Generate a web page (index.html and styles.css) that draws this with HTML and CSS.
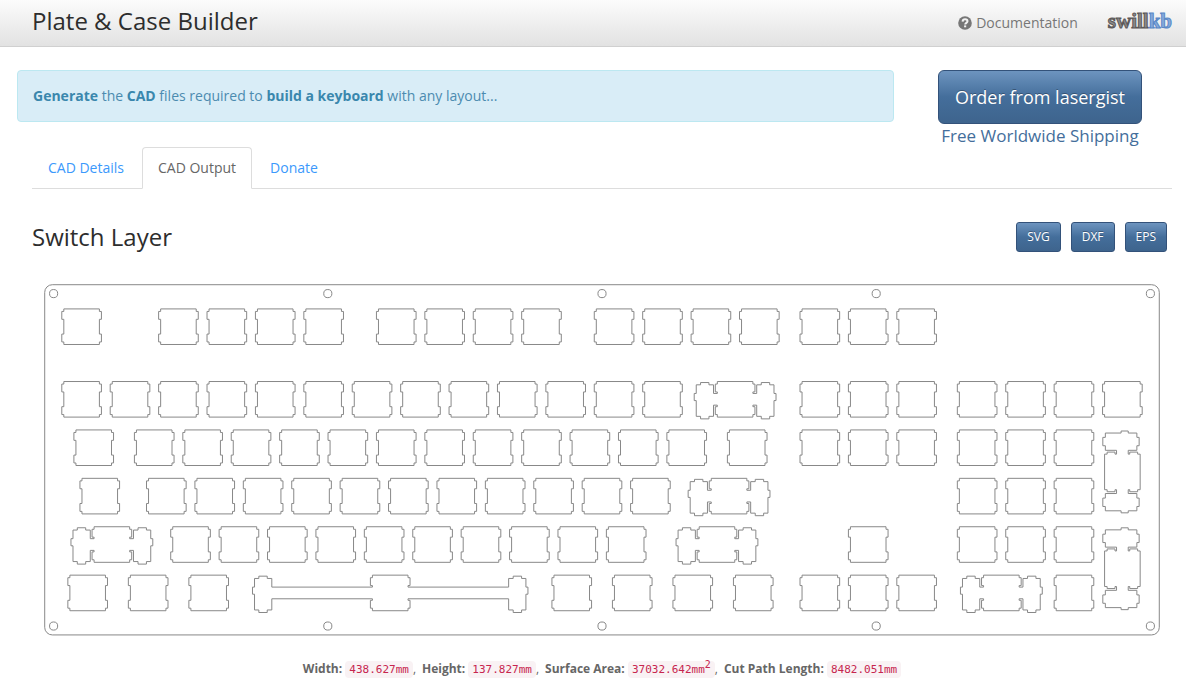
FILE: index.html
```html
<!DOCTYPE html>
<html lang="en">
<head>
<meta charset="utf-8">
<title>Plate &amp; Case Builder</title>
<link rel="stylesheet" href="styles.css">
</head>
<body>
<header class="navbar">
  <h1 class="brand">Plate &amp; Case Builder</h1>
  <nav class="links">
    <a class="docs" href="#docs">
      <svg class="docs-icon" viewBox="0 0 14 14" aria-hidden="true">
        <circle cx="7" cy="7" r="6.8" fill="#777"/>
        <path d="M4.600 5.600C4.700 4 5.700 3.300 7.100 3.300s2.400.8 2.400 2c0 1.600-2.300 1.600-2.300 3.300" fill="none" stroke="#f3f3f3" stroke-width="2"/>
        <rect x="6.100" y="9.400" width="2.100" height="1.900" fill="#f3f3f3"/>
      </svg>
      Documentation
    </a>
    <a class="logo" href="#home">swill<span class="logo-kb">kb</span></a>
  </nav>
</header>
<main class="page">
  <section class="intro">
    <p class="alert"><strong>Generate</strong> the <strong>CAD</strong> files required to <strong>build a keyboard</strong> with any layout...</p>
    <div class="order">
      <button class="btn btn-large" type="button">Order from lasergist</button>
      <a class="shipping" href="#shipping">Free Worldwide Shipping</a>
    </div>
  </section>
  <nav class="tabs">
    <a class="tab" href="#details">CAD Details</a>
    <a class="tab tab-active" href="#output" aria-current="page">CAD Output</a>
    <a class="tab" href="#donate">Donate</a>
  </nav>
  <section class="output">
    <div class="layer-head">
      <h2 class="layer-title">Switch Layer</h2>
      <div class="exports">
        <button class="btn" type="button">SVG</button>
        <button class="btn" type="button">DXF</button>
        <button class="btn" type="button">EPS</button>
      </div>
    </div>
    <svg class="plate" viewBox="0 0 448.627 147.827" role="img" aria-label="Switch layer plate">
      <defs>
        <path id="k1" d="M-7-7H7V-6H7.800V-2.900H7V2.900H7.800V6H7V7H-7V6H-7.800V2.900H-7V-2.900H-7.800V-6H-7Z"/>
        <path id="k2" d="M-7-7H7V-6H7.800V-2.900H7V-2.300H8.500V-5.700H10.300V-6.600H13.600V-5.700H15.300V-2.300H16.100V.5H15.300V6.700H13.600V7.700H10.300V6.700H8.500V2.300H7V2.900H7.800V6H7V7H-7V6H-7.800V2.900H-7V2.300H-8.500V6.700H-10.300V7.700H-13.600V6.700H-15.300V.5H-16.100V-2.300H-15.300V-5.700H-13.600V-6.600H-10.300V-5.700H-8.500V-2.300H-7V-2.900H-7.800V-6H-7Z"/>
        <path id="k6" d="M-7-7H7V-6H7.800V-2.900H7V-2.300H46.600V-5.700H48.400V-6.600H51.700V-5.700H53.400V-2.300H54.200V.5H53.400V6.700H51.700V7.700H48.400V6.700H46.600V2.300H7V2.900H7.800V6H7V7H-7V6H-7.800V2.900H-7V2.300H-46.600V6.700H-48.400V7.700H-51.700V6.700H-53.400V.5H-54.200V-2.300H-53.400V-5.700H-51.700V-6.600H-48.400V-5.700H-46.600V-2.300H-7V-2.900H-7.800V-6H-7Z"/>
      </defs>
      <rect x="5" y="5" width="438.627" height="137.827" rx="3"/>
      <g id="holes"></g>
      <g id="keys" transform="translate(19.525 21.525)"></g>
    </svg>
    <p class="stats">
      <span><strong>Width:</strong> <code>438.627mm</code>,</span>
      <span><strong>Height:</strong> <code>137.827mm</code>,</span>
      <span><strong>Surface Area:</strong> <code>37032.642mm<sup>2</sup></code>,</span>
      <span><strong>Cut Path Length:</strong> <code>8482.051mm</code></span>
    </p>
  </section>
</main>
<script src="plate.js"></script>
</body>
</html>
```
FILE: styles.css
```css
* { box-sizing: border-box; }

body {
  margin: 0;
  background: #fff;
  color: #666;
  font: 14px/20px "Open Sans", sans-serif;
}

a { color: #3b99fc; text-decoration: none; }

.navbar {
  display: flex;
  justify-content: space-between;
  align-items: center;
  height: 47px;
  padding: 0 14px 4px 32px;
  background: linear-gradient(#fcfcfc, #e2e2e2);
  border-bottom: 1px solid #d0d0d0;
}

.brand {
  margin: 0;
  color: #2d2d2d;
  font-size: 24px;
  line-height: 40px;
  font-weight: 400;
}

.links { display: flex; align-items: center; gap: 30px; }
.docs { display: flex; align-items: center; gap: 4px; color: #777; padding-top: 3px; }
.docs-icon { width: 14px; height: 14px; }

.logo {
  color: #8a8a8a;
  font: 700 21px/20px "Liberation Serif", serif;
  -webkit-text-stroke: 1px #5c5858;
  stroke-linejoin: round;
}
.logo-kb { color: #86abdc; -webkit-text-stroke-color: #5a88c6; }

.page { padding: 23px 14px 0 17px; }

.intro { display: flex; align-items: flex-start; gap: 44px; }

.alert {
  flex: 1;
  margin: 0;
  padding: 15px;
  background: #d9edf7;
  border: 1px solid #bce8f1;
  border-radius: 4px;
  color: #4c8bb0;
}
.alert strong { color: #3a87ad; }

.order {
  display: flex;
  flex-direction: column;
  align-items: center;
  margin-right: 30px;
}

.btn {
  padding: 4px 10px;
  border: 1px solid #33527a;
  border-radius: 3px;
  background: linear-gradient(#6d94bf, #446e9b 50%, #3e648d);
  color: #fff;
  font: 12px/20px "Open Sans", sans-serif;
  text-shadow: 0 -1px 0 rgba(0, 0, 0, .3);
}
.btn-large {
  padding: 14px 16px;
  border-radius: 6px;
  font-size: 18px;
  line-height: 24px;
}

.shipping { color: #446e9b; font-size: 17px; line-height: 23px; }

.tabs {
  display: flex;
  margin-left: 15px;
  border-bottom: 1px solid #ddd;
}
.tab {
  margin: 0 2px -1px 0;
  padding: 10px 15px;
  border: 1px solid transparent;
  border-radius: 4px 4px 0 0;
}
.tab-active {
  border-color: #ddd #ddd #fff;
  background: #fff;
  color: #666;
}

.output { padding: 33px 0 0 15px; }

.layer-head {
  display: flex;
  justify-content: space-between;
  align-items: center;
  padding-right: 5px;
}
.layer-title {
  margin: 0;
  color: #2d2d2d;
  font-size: 24px;
  line-height: 30px;
  font-weight: 400;
}
.exports { display: flex; gap: 10px; }

.plate {
  display: block;
  width: 100%;
  margin-top: 20px;
  fill: none;
  stroke: #888;
}
.plate * { vector-effect: non-scaling-stroke; }

.stats {
  display: flex;
  justify-content: center;
  gap: 6px;
  margin: 11px 0 0;
  font-size: 12px;
}
code {
  padding: 2px 4px;
  border-radius: 4px;
  background: #f9f2f4;
  color: #c7254e;
  font: 11px/14px "DejaVu Sans Mono", monospace;
}
sup { font-size: 10px; line-height: 0; }
```
FILE: plate.js
```js
// Key centres as [row, outline, x...], measured in key units from the first key.
const rows = [
  [0, "k1", 0, 2, 3, 4, 5, 6.5, 7.5, 8.5, 9.5, 11, 12, 13, 14, 15.25, 16.25, 17.25],
  [1.5, "k1", 0, 1, 2, 3, 4, 5, 6, 7, 8, 9, 10, 11, 12, 15.25, 16.25, 17.25, 18.5, 19.5, 20.5, 21.5],
  [1.5, "k2", 13.5],
  [2.5, "k1", 0.25, 1.5, 2.5, 3.5, 4.5, 5.5, 6.5, 7.5, 8.5, 9.5, 10.5, 11.5, 12.5, 13.75, 15.25, 16.25, 17.25, 18.5, 19.5, 20.5],
  [3.5, "k1", 0.375, 1.75, 2.75, 3.75, 4.75, 5.75, 6.75, 7.75, 8.75, 9.75, 10.75, 11.75, 18.5, 19.5, 20.5],
  [3.5, "k2", 13.375],
  [4.5, "k2", 0.625, 13.125],
  [4.5, "k1", 2.25, 3.25, 4.25, 5.25, 6.25, 7.25, 8.25, 9.25, 10.25, 11.25, 16.25, 18.5, 19.5, 20.5],
  [5.5, "k1", 0.125, 1.375, 2.625, 10.125, 11.375, 12.625, 13.875, 15.25, 16.25, 17.25, 20.5],
  [5.5, "k6", 6.375],
  [5.5, "k2", 19]
];
const tall = [[21.5, 3], [21.5, 5]];
const unit = 19.05;
const ns = "http://www.w3.org/2000/svg";

function add(parent, tag, attrs) {
  const el = document.createElementNS(ns, tag);
  for (const name in attrs) el.setAttribute(name, attrs[name]);
  parent.append(el);
}

const keys = document.getElementById("keys");
for (const [y, shape, ...xs] of rows) {
  for (const x of xs) {
    add(keys, "use", { href: "#" + shape, transform: `translate(${x * unit} ${y * unit})` });
  }
}
for (const [x, y] of tall) {
  add(keys, "use", { href: "#k2", transform: `translate(${x * unit} ${y * unit}) rotate(90)` });
}

const holes = document.getElementById("holes");
for (const y of [8.5, 139.327]) {
  for (let i = 0; i < 5; i++) {
    add(holes, "circle", { cx: 8.5 + i * 107.907, cy: y, r: 1.6 });
  }
}
```
